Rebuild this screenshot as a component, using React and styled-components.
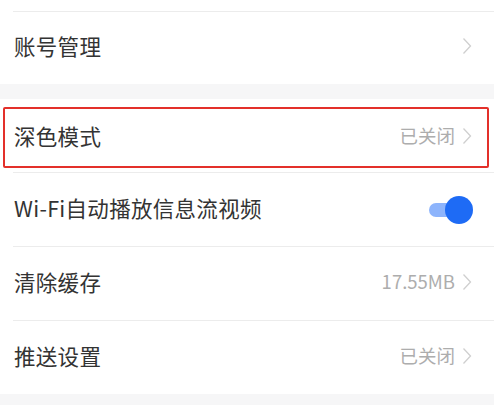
import React from "react";
import styled, { createGlobalStyle } from "styled-components";

const GlobalStyle = createGlobalStyle`
  html, body {
    margin: 0;
    padding: 0;
    background: #ffffff;
  }
  body {
    font-family: "Noto Sans CJK SC", "Noto Sans", sans-serif;
  }
`;

const Page = styled.div`
  width: 494px;
  height: 405px;
  overflow: hidden;
  background: #ffffff;
  padding-top: 11px;
`;

const Group = styled.div`
  background: #ffffff;
`;

const Gap = styled.div`
  height: ${(p) => p.h}px;
  background: #f6f6f7;
`;

const Divider = styled.div`
  height: 1px;
  margin-left: 13px;
  background: #ececec;
`;

const Row = styled.div`
  height: ${(p) => p.h || 73}px;
  display: flex;
  align-items: center;
  padding: 0 22px 4px 14px;
  box-sizing: border-box;
`;

const HighlightRow = styled.div`
  height: 73px;
  padding: 8px 5px 4px 3px;
  box-sizing: border-box;
`;

const Highlight = styled.div`
  height: 100%;
  border: 2px solid #e3302a;
  border-radius: 2px;
  display: flex;
  align-items: center;
  padding: 0 15px 4px 9px;
  box-sizing: border-box;
`;

const Label = styled.span`
  flex: 1;
  font-size: 21.5px;
  line-height: 1;
  color: #333333;
  letter-spacing: 0.3px;
`;

const Value = styled.span`
  font-size: 18.5px;
  line-height: 1;
  color: #adadad;
  margin-right: 7px;
`;

const Chevron = () => (
  <svg width="10" height="18" viewBox="0 0 10 18">
    <path d="M1.5 1.5 L8.5 9 L1.5 16.5" fill="none" stroke="#cfcfcf" strokeWidth="1.3" />
  </svg>
);

const Track = styled.div`
  position: relative;
  width: 42px;
  height: 28px;
  margin-right: 1px;
  margin-top: 4px;
  display: flex;
  align-items: center;
  &::before {
    content: "";
    width: 36px;
    height: 14px;
    border-radius: 7px;
    background: #8db4fc;
  }
`;

const Knob = styled.div`
  position: absolute;
  right: -2px;
  top: 0;
  width: 28px;
  height: 28px;
  border-radius: 50%;
  background: #1e6bf5;
`;

const settings = [
  { label: "清除缓存", value: "17.55MB" },
  { label: "推送设置", value: "已关闭" },
];

export default function App() {
  return (
    <>
      <GlobalStyle />
      <Page>
        <Divider />
        <Group>
          <Row h={72}>
            <Label>账号管理</Label>
            <Chevron />
          </Row>
        </Group>
        <Gap h={15} />
        <Group>
          <HighlightRow>
            <Highlight>
              <Label>深色模式</Label>
              <Value>已关闭</Value>
              <Chevron />
            </Highlight>
          </HighlightRow>
          <Divider />
          <Row>
            <Label>Wi-Fi自动播放信息流视频</Label>
            <Track>
              <Knob />
            </Track>
          </Row>
          {settings.map((s) => (
            <React.Fragment key={s.label}>
              <Divider />
              <Row>
                <Label>{s.label}</Label>
                <Value>{s.value}</Value>
                <Chevron />
              </Row>
            </React.Fragment>
          ))}
        </Group>
        <Gap h={20} />
      </Page>
    </>
  );
}
